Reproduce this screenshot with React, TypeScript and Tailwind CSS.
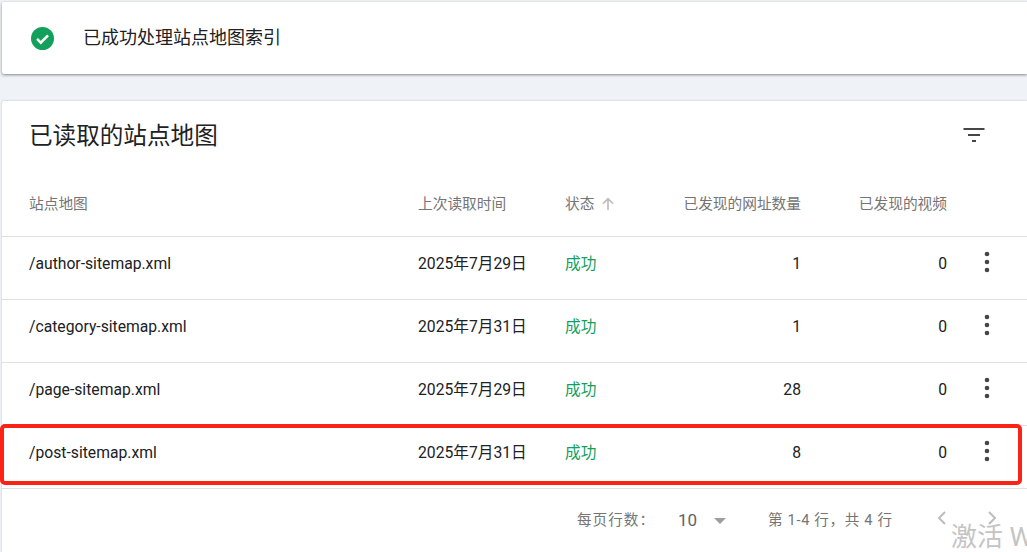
import React from "react";

const font = { fontFamily: '"Roboto","Noto Sans CJK SC",sans-serif' };

const rows = [
  ["/author-sitemap.xml", "2025年7月29日", "1"],
  ["/category-sitemap.xml", "2025年7月31日", "1"],
  ["/page-sitemap.xml", "2025年7月29日", "28"],
  ["/post-sitemap.xml", "2025年7月31日", "8"],
];

const gridCols = "grid grid-cols-[389px_147px_90px_146px_146px_80px] items-center pl-[27px]";

function Dots() {
  return (
    <svg width="24" height="24" viewBox="0 0 24 24" fill="#444746" className="ml-[28px] -mt-[3px]">
      <circle cx="12" cy="4" r="2.300" />
      <circle cx="12" cy="12" r="2.300" />
      <circle cx="12" cy="20" r="2.300" />
    </svg>
  );
}

export default function App() {
  return (
    <div className="relative h-[552px] w-[1027px] overflow-hidden bg-[#eff2f6] pl-[2px] pt-[2px]" style={font}>
      <div className="flex h-[72px] items-center rounded-l-[2px] bg-white pl-[29px] shadow-[0_1px_3px_rgba(60,64,67,0.6)]">
        <svg width="23" height="23" viewBox="0 0 24 24">
          <circle cx="12" cy="12" r="12" fill="#12a05c" />
          <path d="M6.300 12.400l3.900 3.900 7.600-7.600" fill="none" stroke="#fff" strokeWidth="2.600" />
        </svg>
        <span className="ml-[29px] text-[18px] leading-6 text-[#202124]">已成功处理站点地图索引</span>
      </div>

      <div className="mt-[27px] h-[460px] rounded-tl-[2px] bg-white shadow-[0_0_2px_rgba(60,64,67,0.35)]">
        <div className="flex h-[70px] items-center justify-between pl-[27px] pr-[41px]">
          <h2 className="text-[23.600px] font-normal leading-7 text-[#202124]">已读取的站点地图</h2>
          <svg width="24" height="24" viewBox="0 0 24 24" fill="#444746" className="-mt-[3px]">
            <path d="M1.500 5h21v2h-21zM6 11h12v2H6zM10 17h4v2h-4z" />
          </svg>
        </div>

        <div className={`${gridCols} h-[66px] border-b border-[#e0e0e0] pt-[2px] text-[14.700px] text-[#757575]`}>
          <div>站点地图</div>
          <div>上次读取时间</div>
          <div className="flex items-center">
            状态
            <svg width="18" height="18" viewBox="0 0 24 24" fill="none" stroke="#bdbdbd" strokeWidth="2.200" className="ml-[5px]">
              <path d="M12 20V5M5.500 11.500L12 5l6.500 6.500" />
            </svg>
          </div>
          <div className="text-right">已发现的网址数量</div>
          <div className="text-right">已发现的视频</div>
          <div />
        </div>

        {rows.map((r) => (
          <div key={r[0]} className={`${gridCols} h-[63px] border-b border-[#e0e0e0] pb-[9px] text-[15.700px] text-[#202124]`}>
            <div>{r[0]}</div>
            <div>{r[1]}</div>
            <div className="text-[#12a05c]">成功</div>
            <div className="text-right">{r[2]}</div>
            <div className="text-right">0</div>
            <Dots />
          </div>
        ))}

        <div className="flex h-[64px] items-center text-[14.600px] text-[#757575]">
          <span className="ml-[575px] tracking-[1px]">{"每页行数\uFF1A"}</span>
          <span className="ml-[23px] text-[17px] text-[#5f6368]">10</span>
          <svg width="14" height="8" viewBox="0 0 14 8" fill="#9e9e9e" className="ml-[16px]">
            <path d="M1 1h12L7 7z" />
          </svg>
          <span className="ml-[41px] tracking-[0.650px]">{"第 1-4 行\uFF0C共 4 行"}</span>
          <svg width="12" height="16" viewBox="0 0 12 16" fill="none" stroke="#bdbdbd" strokeWidth="2" className="ml-[43px] -mt-[6px]">
            <path d="M9 2L3 8l6 6" />
          </svg>
          <svg width="12" height="16" viewBox="0 0 12 16" fill="none" stroke="#bdbdbd" strokeWidth="2" className="ml-[38px] -mt-[6px]">
            <path d="M3 2l6 6-6 6" />
          </svg>
        </div>
      </div>

      <div className="absolute left-0 top-[424px] h-[61px] w-[1022px] rounded-[5px] border-[4px] border-[#fb2216]" />
      <div className="absolute left-[951px] top-[519px] whitespace-nowrap text-[26px] leading-9 text-[#c4c4c4]">激活 Windows</div>
    </div>
  );
}
